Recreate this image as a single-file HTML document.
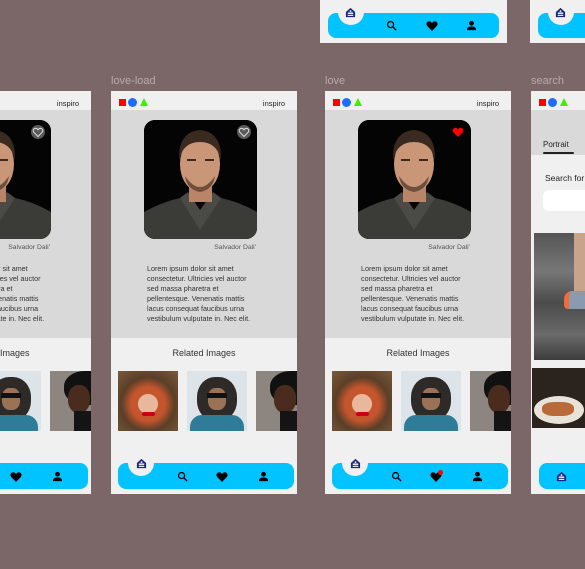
<!DOCTYPE html>
<html><head><meta charset="utf-8"><style>
*{margin:0;padding:0;box-sizing:border-box}
html,body{width:585px;height:569px;overflow:hidden}
body{background:#7b6767;position:relative;font-family:"Liberation Sans",sans-serif}
.fr{position:absolute;width:186px;background:#f0f0f0;overflow:hidden}
.lbl{position:absolute;color:#b9abab;font-size:11px}
.hd{position:absolute;left:0;top:0;width:186px;height:19px;background:#f0f0f0}
.sq{position:absolute;left:8px;top:8px;width:7px;height:7px;background:#f00}
.ci{position:absolute;left:17px;top:7px;width:9px;height:9px;border-radius:50%;background:#1a6dff}
.tr{position:absolute;left:29px;top:7px;width:0;height:0;border-left:4.5px solid transparent;border-right:4.5px solid transparent;border-bottom:8px solid #3cf000}
.ins{position:absolute;right:12px;top:8px;font-size:7.5px;color:#222}
.gr{position:absolute;left:0;top:19px;width:186px;height:228px;background:#d9d9d9}
.pic{position:absolute;left:33px;top:29px;width:113px;height:119px;border-radius:11px;overflow:hidden;background:#050505}
.hrt{position:absolute;left:126px;top:34px;width:14px;height:14px;border-radius:50%;background:#5a5a5a}
.sal{position:absolute;right:41px;top:153px;font-size:6.8px;color:#555}
.par{position:absolute;left:36px;top:173px;width:140px;font-size:7.2px;line-height:10px;color:#333}
.rel{position:absolute;left:0;width:186px;top:257px;text-align:center;font-size:9px;color:#333}
.th{position:absolute;top:280px;width:60px;height:60px;overflow:hidden}
.nav{position:absolute;width:176px;height:26px;background:#00c3ff;border-radius:8px}
.notch{position:absolute;width:26px;height:26px;border-radius:50%;background:#f0f0f0}
</style></head><body>

<svg width="0" height="0" style="position:absolute">
<defs>
<symbol id="man" viewBox="0 0 113 119">
<rect width="113" height="119" fill="#040404"/>
<path d="M0 92 Q18 82 36 78 L56 98 L77 78 Q96 82 113 92 L113 119 L0 119Z" fill="#3b3b38"/>
<path d="M36 78 L56 110 L77 78 L69 72 L56 90 L44 72Z" fill="#4a4a46"/>
<rect x="45" y="62" width="23" height="20" fill="#b98468"/>
<ellipse cx="56" cy="44" rx="20" ry="28" fill="#c99678"/>
<path d="M35 40 Q34 12 56 10 Q78 12 77 40 Q73 22 56 22 Q39 22 35 40Z" fill="#3a2a20"/>
<path d="M41 56 Q56 78 71 56 Q69 70 56 72 Q43 70 41 56Z" fill="#6e4e3c"/>
<rect x="43" y="39" width="9" height="2" fill="#3a2a20"/><rect x="61" y="39" width="9" height="2" fill="#3a2a20"/>
</symbol>
<symbol id="home" viewBox="0 0 12 12"><path d="M6 1 L11 5.5 L11 11 L1 11 L1 5.5Z" fill="#1a237e"/><rect x="3" y="6" width="6" height="1.5" fill="#fff"/><rect x="3" y="8.5" width="6" height="1.2" fill="#fff"/><circle cx="6" cy="4.5" r="1" fill="#fff"/></symbol>
<symbol id="srch" viewBox="0 0 12 12"><circle cx="5" cy="5" r="3.3" fill="none" stroke="#000" stroke-width="1.4"/><path d="M7.5 7.5 L11 11" stroke="#000" stroke-width="1.6"/></symbol>
<symbol id="heart" viewBox="0 0 12 12"><path d="M6 11 L1.2 6 Q-0.5 3.5 1.5 1.8 Q4 0.3 6 3 Q8 0.3 10.5 1.8 Q12.5 3.5 10.8 6Z" fill="#000"/></symbol>
<symbol id="user" viewBox="0 0 12 12"><circle cx="6" cy="3.5" r="2.6" fill="#000"/><path d="M1 11 Q1 7 6 7 Q11 7 11 11Z" fill="#000"/></symbol>
</defs></svg>

<div class="fr" style="left:320px;top:0;height:43px;width:187px">
 <div class="nav" style="left:8px;top:13px;width:171px;height:25px"></div>
 <div class="notch" style="left:18px;top:-1px"></div>
 <svg style="position:absolute;left:25px;top:7px" width="11" height="11"><use href="#home"/></svg>
 <svg style="position:absolute;left:66px;top:20px" width="11" height="11"><use href="#srch"/></svg>
 <svg style="position:absolute;left:106px;top:20px" width="12" height="12"><use href="#heart"/></svg>
 <svg style="position:absolute;left:146px;top:20px" width="11" height="11"><use href="#user"/></svg>
</div>
<div class="fr" style="left:530px;top:0;height:43px;width:55px">
 <div class="nav" style="left:8px;top:13px;height:25px"></div>
 <div class="notch" style="left:18px;top:-1px"></div>
 <svg style="position:absolute;left:25px;top:7px" width="11" height="11"><use href="#home"/></svg>
</div>

<div class="lbl" style="left:111px;top:75px">love-load</div>
<div class="lbl" style="left:325px;top:75px">love</div>
<div class="lbl" style="left:531px;top:75px">search</div>

<div style="position:absolute;left:0;top:91px;width:91px;height:403px;overflow:hidden"><div class="fr" style="left:-95px;top:0;height:403px" id="A"></div></div>
<div class="fr" style="left:111px;top:91px;height:403px" id="B"></div>
<div class="fr" style="left:325px;top:91px;height:403px" id="C"></div>

<div class="fr" style="left:531px;top:91px;height:403px;width:54px">
 <div class="hd"></div><div class="sq"></div><div class="ci"></div><div class="tr"></div>
 <div style="position:absolute;left:0;top:19px;width:186px;height:45px;background:#d9d9d9"></div>
 <div style="position:absolute;left:12px;top:49px;font-size:8px;color:#222">Portrait</div>
 <div style="position:absolute;left:12px;top:61px;width:31px;height:2px;background:#222;border-radius:1px"></div>
 <div style="position:absolute;left:14px;top:82px;font-size:8.5px;color:#222;white-space:nowrap">Search for</div>
 <div style="position:absolute;left:12px;top:99px;width:100px;height:21px;background:#fff;border-radius:6px"></div>
 <div style="position:absolute;left:3px;top:142px;width:80px;height:127px;background:linear-gradient(180deg,#555 0%,#777 30%,#4b4b4b 55%,#6a6a6a 80%,#3c3c3c 100%)">
  <div style="position:absolute;left:40px;top:0;width:20px;height:60px;background:#c9a48c"></div>
  <div style="position:absolute;left:30px;top:58px;width:30px;height:18px;background:#8a9bb0;border-radius:8px 8px 4px 4px;border-left:5px solid #f06a3c"></div>
 </div>
 <div style="position:absolute;left:1px;top:277px;width:80px;height:60px;background:#2a231e">
  <div style="position:absolute;left:2px;top:28px;width:50px;height:28px;border-radius:50%;background:#e9e2d8"></div>
  <div style="position:absolute;left:10px;top:34px;width:32px;height:14px;border-radius:40%;background:#b86a38"></div>
 </div>
 <div class="nav" style="left:8px;top:372px"></div>
 <svg style="position:absolute;left:25px;top:380px" width="11" height="11"><use href="#home"/></svg>
</div>

<template id="t">
 <div class="hd"></div><div class="sq"></div><div class="ci"></div><div class="tr"></div>
 <div class="ins">inspiro</div>
 <div class="gr"></div>
 <div class="pic"><svg width="113" height="119"><use href="#man"/></svg></div>
 <div class="hrt"><svg width="14" height="14" viewBox="0 0 14 14"><path d="M7 11.5 L2.8 7.2 Q1.5 5.2 3.2 3.8 Q5.3 2.5 7 4.8 Q8.7 2.5 10.8 3.8 Q12.5 5.2 11.2 7.2Z" fill="none" stroke="#ddd" stroke-width="1"/></svg></div>
 <div class="sal">Salvador Dali'</div>
 <div class="par">Lorem ipsum dolor sit amet<br>consectetur. Ultricies vel auctor<br>sed massa pharetra et<br>pellentesque. Venenatis mattis<br>lacus consequat faucibus urna<br>vestibulum vulputate in. Nec elit.</div>
 <div class="rel">Related Images</div>
 <div class="th" style="left:7px;background:radial-gradient(circle at 50% 55%,#e8b79c 0 22%,#c4552d 23% 38%,#5a3f28 60%,#7a5a3a)"><div style="position:absolute;left:24px;top:41px;width:13px;height:4px;border-radius:3px;background:#c80018"></div></div>
 <div class="th" style="left:76px;background:#dce4ea"><div style="position:absolute;left:10px;top:6px;width:40px;height:44px;border-radius:45%;background:#2e2a28"></div><div style="position:absolute;left:21px;top:17px;width:18px;height:22px;border-radius:40%;background:#9c7256"></div><div style="position:absolute;left:20px;top:22px;width:20px;height:5px;background:#111"></div><div style="position:absolute;left:3px;top:44px;width:54px;height:20px;border-radius:12px 12px 0 0;background:#2f7c98"></div></div>
 <div class="th" style="left:145px;background:#8c8580"><div style="position:absolute;left:14px;top:0;width:46px;height:34px;border-radius:45%;background:#111"></div><div style="position:absolute;left:18px;top:14px;width:22px;height:28px;border-radius:45%;background:#4a2c1e"></div><div style="position:absolute;left:24px;top:40px;width:40px;height:22px;background:#141414"></div></div>
 <div class="nav" style="left:7px;top:372px"></div>
 <div class="notch" style="left:17px;top:359px"></div>
 <svg style="position:absolute;left:25px;top:367px" width="11" height="11"><use href="#home"/></svg>
 <svg style="position:absolute;left:66px;top:380px" width="11" height="11"><use href="#srch"/></svg>
 <svg style="position:absolute;left:105px;top:380px" width="12" height="12"><use href="#heart"/></svg>
 <svg style="position:absolute;left:147px;top:380px" width="11" height="11"><use href="#user"/></svg>
</template>
<script>
['A','B','C'].forEach(function(id){document.getElementById(id).innerHTML=document.getElementById('t').innerHTML;});
var c=document.getElementById('C');
var h=c.querySelector('.hrt');h.style.background='transparent';
h.innerHTML='<svg width="14" height="14" viewBox="0 0 14 14"><path d="M7 12 L2.3 7.3 Q0.8 5 2.8 3.3 Q5.2 1.8 7 4.4 Q8.8 1.8 11.2 3.3 Q13.2 5 11.7 7.3Z" fill="#f00"/></svg>';
var d=document.createElement('div');d.style.cssText='position:absolute;left:113px;top:379px;width:5px;height:5px;border-radius:50%;background:#f00';c.appendChild(d);
</script>
</body></html>
